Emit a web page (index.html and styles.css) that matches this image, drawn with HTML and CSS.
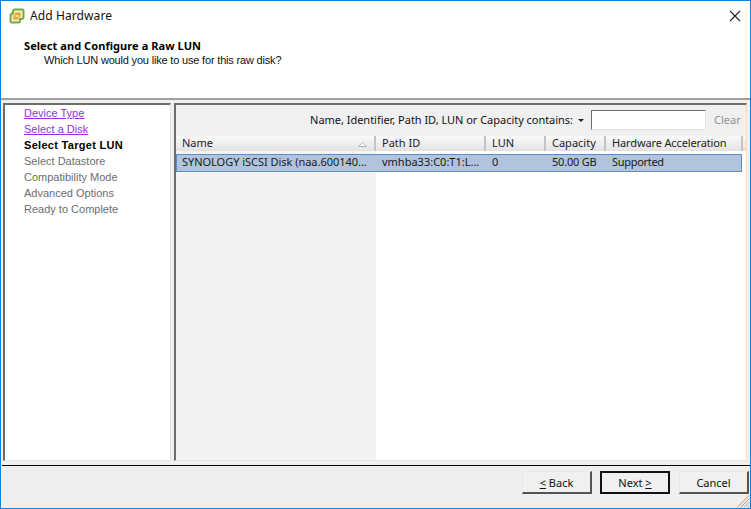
FILE: index.html
```html
<!DOCTYPE html>
<html>
<head>
<meta charset="utf-8">
<title>Add Hardware</title>
<link rel="stylesheet" href="styles.css">
</head>
<body>
<div class="window">
  <div class="titlebar">
    <svg class="logo" width="16" height="16" viewBox="0 0 16 16">
      <path d="M5.500 1.500h8a1.500 1.500 0 0 1 1 1v7a2 2 0 0 1-1.500 1.500H11v2a1.500 1.500 0 0 1-1.500 1.500h-7a1.500 1.500 0 0 1-1-1V7a2 2 0 0 1 1.500-1.500H4V3a1.500 1.500 0 0 1 1.500-1.500z" fill="#e6efd2" stroke="#7fa83c" stroke-width="2"/>
      <path d="M6 4.500h5.500V9H9.500v2.500H4.500V7H6z" fill="#eba52a"/>
      <path d="M6.500 7h3v2h-3z" fill="#fbe6a8"/>
    </svg>
    <span class="title">Add Hardware</span>
    <svg class="close" width="12" height="12" viewBox="0 0 12 12"><path d="M1 1l10 10M11 1L1 11" stroke="#222" stroke-width="1.100" fill="none"/></svg>
  </div>
  <div class="header">
    <div class="h-title">Select and Configure a Raw LUN</div>
    <div class="h-sub">Which LUN would you like to use for this raw disk?</div>
  </div>
  <div class="body">
    <nav class="steps">
      <a class="step link">Device Type</a>
      <a class="step link">Select a Disk</a>
      <span class="step current">Select Target LUN</span>
      <span class="step">Select Datastore</span>
      <span class="step">Compatibility Mode</span>
      <span class="step">Advanced Options</span>
      <span class="step">Ready to Complete</span>
    </nav>
    <section class="content">
      <div class="filter">
        <span class="filter-label">Name, Identifier, Path ID, LUN or Capacity contains:</span>
        <span class="caret"></span>
        <span class="filter-input"></span>
        <span class="clear">Clear</span>
      </div>
      <div class="table">
        <div class="thead">
          <div class="th c1">Name<svg class="sort" width="9" height="5" viewBox="0 0 9 5"><path d="M4.500 .5L8.500 4.500H.5z" fill="#fff" stroke="#b5b5b5" stroke-width="1"/></svg></div>
          <div class="th c2">Path ID</div>
          <div class="th c3">LUN</div>
          <div class="th c4">Capacity</div>
          <div class="th c5">Hardware Acceleration</div>
          <div class="th c6"></div>
        </div>
        <div class="tbody">
          <div class="sorted-col"></div>
          <div class="row">
            <div class="td c1">SYNOLOGY iSCSI Disk (naa.600140...</div>
            <div class="td c2">vmhba33:C0:T1:L...</div>
            <div class="td c3">0</div>
            <div class="td c4">50.00 GB</div>
            <div class="td c5">Supported</div>
          </div>
        </div>
      </div>
    </section>
  </div>
  <div class="footer">
    <button class="btn"><u>&lt;</u> Back</button>
    <button class="btn default">Next <u>&gt;</u></button>
    <button class="btn last">Cancel</button>
    <svg class="grip" width="14" height="14" viewBox="0 0 14 14"><path d="M13.500 1L1 13.500M13.500 4.500L4.500 13.500M13.500 8L8 13.500M13.500 11.500L11.500 13.500" stroke="#9a9a9a" stroke-width="1" fill="none"/></svg>
  </div>
</div>
</body>
</html>
```
FILE: styles.css
```css
* { box-sizing: border-box; }
html, body { margin: 0; padding: 0; }
body { width: 751px; height: 509px; overflow: hidden; font-family: "Noto Sans", "Open Sans", sans-serif; font-size: 11px; color: #000; }
.window { width: 751px; height: 509px; border: 1px solid #0f80dc; display: flex; flex-direction: column; background: #fff; }
.titlebar { height: 29px; display: flex; align-items: center; padding: 0 9px 0 8px; flex: none; }
.title { font-size: 12px; margin-left: 5px; color: #111; flex: 1; letter-spacing: 0.1px; }
.header { height: 70px; flex: none; padding: 9px 0 0 23px; border-bottom: 2px solid #a0a0a0; background: #fff; }
.h-title { font-weight: 700; line-height: 14px; letter-spacing: 0.07px; }
.h-sub { padding-left: 20px; line-height: 15px; color: #111; font-family: "Liberation Sans", sans-serif; letter-spacing: -0.18px; }
.body { height: 365px; flex: none; background: #f0f0f0; display: flex; padding: 3px 3px 4px 2px; gap: 3px; }
.steps { width: 168px; flex: none; background: #fff; border-top: 2px solid #6d6d6d; border-left: 2px solid #6d6d6d; border-bottom: 1px solid #e3e3e3; border-right: 1px solid #e3e3e3; padding: 0 0 0 19px; display: flex; flex-direction: column; font-family: "Liberation Sans", sans-serif; }
.step { line-height: 16px; height: 16px; color: #6d6d6d; }
.step.link { color: #9a2ee0; text-decoration: underline; }
.step.current { color: #000; font-weight: 700; letter-spacing: 0.3px; }
.content { flex: 1; min-width: 0; border-top: 2px solid #6d6d6d; border-left: 2px solid #6d6d6d; border-bottom: 1px solid #e3e3e3; border-right: 1px solid #e3e3e3; display: flex; flex-direction: column; background: #f0f0f0; }
.filter { height: 31px; flex: none; display: flex; align-items: center; padding: 0 5px 1px 0; justify-content: flex-end; }
.filter-label { color: #111; margin-bottom: 2px; letter-spacing: -0.03px; }
.caret { width: 0; height: 0; border-left: 3px solid transparent; border-right: 3px solid transparent; border-top: 3px solid #222; margin: 1px 0 0 5px; }
.filter-input { width: 115px; height: 20px; margin-left: 7px; background: #fff; border: 1px solid #9b9b9b; border-top-color: #6d6d6d; border-left-color: #6d6d6d; border-right-color: #e3e3e3; border-bottom-color: #e3e3e3; }
.clear { color: #909090; margin-left: 8px; margin-bottom: 2px; width: 27px; }
.table { flex: 1; background: #fff; display: flex; flex-direction: column; min-height: 0; }
.thead { height: 15px; flex: none; display: flex; background: linear-gradient(#fafafa, #e2e2e2); }
.th { padding-left: 6px; line-height: 13px; border-right: 2px solid #c4c4c4; color: #222; position: relative; flex: none; white-space: nowrap; }
.c1 { width: 200px; }
.c2 { width: 110px; }
.c3 { width: 60px; }
.c4 { width: 60px; }
.c5 { width: 137px; }
.th.c5 { letter-spacing: -0.13px; }
.th.c6 { flex: 1; border-right: 0; }
.sort { position: absolute; right: 7px; top: 6px; }
.tbody { flex: 1; position: relative; min-height: 0; padding-top: 3px; }
.sorted-col { position: absolute; left: 0; top: 0; bottom: 0; width: 200px; background: #f3f3f3; }
.row { position: relative; display: flex; height: 18px; width: 566px; background: #b0c4de; border: 1px solid #5e8fc4; }
.td { padding-left: 6px; line-height: 14px; color: #1a1a1a; white-space: nowrap; flex: none; }
.row .c1 { width: 199px; padding-left: 5px; letter-spacing: -0.03px; }
.row .c4 { letter-spacing: -0.2px; }
.row .c5 { letter-spacing: -0.3px; }
.footer { flex: 1; position: relative; background: #efefef; border-top: 1px solid #000; margin-left: 1px; display: flex; justify-content: flex-end; align-items: flex-start; padding: 5px 1px 0 0; gap: 8px; }
.btn { width: 70px; height: 23px; padding: 0; background: #f0f0f0; font: inherit; color: #111; border: 1px solid #fff; border-right: 2px solid #555; border-bottom: 2px solid #555; border-top-color: #e8e8e8; border-left-color: #e8e8e8; }
.btn.default { border: 2px solid #111; }
.btn.last { margin-left: 1px; }
.grip { position: absolute; right: 0; bottom: 0; }
```
